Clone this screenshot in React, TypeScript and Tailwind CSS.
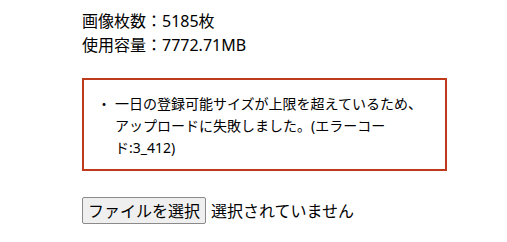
import React from 'react';

const font = { fontFamily: '"Noto Sans", "Noto Sans CJK JP", sans-serif' };

export default function App() {
  return (
    <div className="w-[507px] h-[242px] bg-white text-black" style={font}>
      <div className="pl-[82px] pt-[9px] w-[447px]">
        <div className="text-[16px] leading-[24px]">
          <p>画像枚数：5185枚</p>
          <p>使用容量：7772.71MB</p>
        </div>

        <div className="mt-[21px] w-[365px] h-[93px] border-2 border-[#bd3a1c] pt-[13px] pb-[10px] pl-[13px] pr-[10px] text-[14px] leading-[22px]">
          <div className="flex">
            <span className="w-[18px] shrink-0">・</span>
            <span>一日の登録可能サイズが上限を超えているため、アップロードに失敗しました。(エラーコード:3_412)</span>
          </div>
        </div>

        <div className="mt-[26px] flex items-center gap-[5px] text-[16px]">
          <button className="h-[27px] px-[5px] bg-[#efefef] border border-[#8a8a8a] rounded-[2px] text-[16px] leading-[24px] text-black">
            ファイルを選択
          </button>
          <span className="leading-[24px]">選択されていません</span>
        </div>
      </div>
    </div>
  );
}
